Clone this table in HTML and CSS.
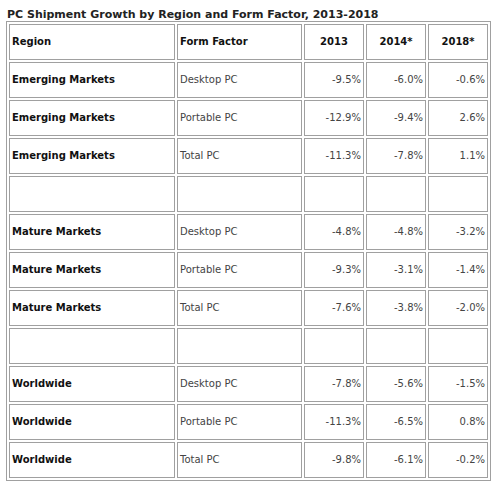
FILE: index.html
```html
<!DOCTYPE html>
<html lang="en">
<head>
  <meta charset="UTF-8">
  <title>PC Shipment Growth by Region and Form Factor</title>
  <link rel="stylesheet" href="styles.css">
</head>
<body>
  <div class="title">PC Shipment Growth by Region and Form Factor, 2013-2018</div>

  <!-- Forecast table -->
  <table class="growth">
    <colgroup>
      <col class="c-region">
      <col class="c-form">
      <col class="c-num">
      <col class="c-num">
      <col class="c-num">
    </colgroup>
    <tr class="head">
      <td>Region</td>
      <td>Form Factor</td>
      <td class="center">2013</td>
      <td class="center">2014*</td>
      <td class="center">2018*</td>
    </tr>
    <tr>
      <td class="region">Emerging Markets</td>
      <td>Desktop PC</td>
      <td class="num">-9.5%</td>
      <td class="num">-6.0%</td>
      <td class="num">-0.6%</td>
    </tr>
    <tr>
      <td class="region">Emerging Markets</td>
      <td>Portable PC</td>
      <td class="num">-12.9%</td>
      <td class="num">-9.4%</td>
      <td class="num">2.6%</td>
    </tr>
    <tr>
      <td class="region">Emerging Markets</td>
      <td>Total PC</td>
      <td class="num">-11.3%</td>
      <td class="num">-7.8%</td>
      <td class="num">1.1%</td>
    </tr>
    <tr>
      <td></td><td></td><td></td><td></td><td></td>
    </tr>
    <tr>
      <td class="region">Mature Markets</td>
      <td>Desktop PC</td>
      <td class="num">-4.8%</td>
      <td class="num">-4.8%</td>
      <td class="num">-3.2%</td>
    </tr>
    <tr>
      <td class="region">Mature Markets</td>
      <td>Portable PC</td>
      <td class="num">-9.3%</td>
      <td class="num">-3.1%</td>
      <td class="num">-1.4%</td>
    </tr>
    <tr>
      <td class="region">Mature Markets</td>
      <td>Total PC</td>
      <td class="num">-7.6%</td>
      <td class="num">-3.8%</td>
      <td class="num">-2.0%</td>
    </tr>
    <tr>
      <td></td><td></td><td></td><td></td><td></td>
    </tr>
    <tr>
      <td class="region">Worldwide</td>
      <td>Desktop PC</td>
      <td class="num">-7.8%</td>
      <td class="num">-5.6%</td>
      <td class="num">-1.5%</td>
    </tr>
    <tr>
      <td class="region">Worldwide</td>
      <td>Portable PC</td>
      <td class="num">-11.3%</td>
      <td class="num">-6.5%</td>
      <td class="num">0.8%</td>
    </tr>
    <tr>
      <td class="region">Worldwide</td>
      <td>Total PC</td>
      <td class="num">-9.8%</td>
      <td class="num">-6.1%</td>
      <td class="num">-0.2%</td>
    </tr>
  </table>
</body>
</html>
```

FILE: styles.css
```css
/* Page */
body {
    margin: 0;
    padding: 8px 6px 0 6px;
    background-color: #ffffff;
    font-family: "DejaVu Sans", Verdana, sans-serif;
    color: #333;
}

.title {
    font-size: 11px;
    font-weight: bold;
    color: #222;
    line-height: 13px;
    margin: 0 0 0 1px;
}

/* Table with old-school double borders */
.growth {
    border-collapse: separate;
    border-spacing: 2px;
    border: 1px solid #a0a0a0;
    width: 485px;
    table-layout: fixed;
}

.c-region { width: 166px; }
.c-form   { width: 125px; }
.c-num    { width: 60px; }

.growth td {
    border: 1px solid #a0a0a0;
    height: 36px;
    padding: 0 2px 2px 2px;
    box-sizing: border-box;
    font-size: 10px;
    color: #444;
    vertical-align: middle;
    white-space: nowrap;
}

.growth .head td {
    font-weight: bold;
    color: #111;
}

.growth td.region {
    font-weight: bold;
    color: #111;
}

.growth td.center {
    text-align: center;
}

.growth td.num {
    text-align: right;
}
```
